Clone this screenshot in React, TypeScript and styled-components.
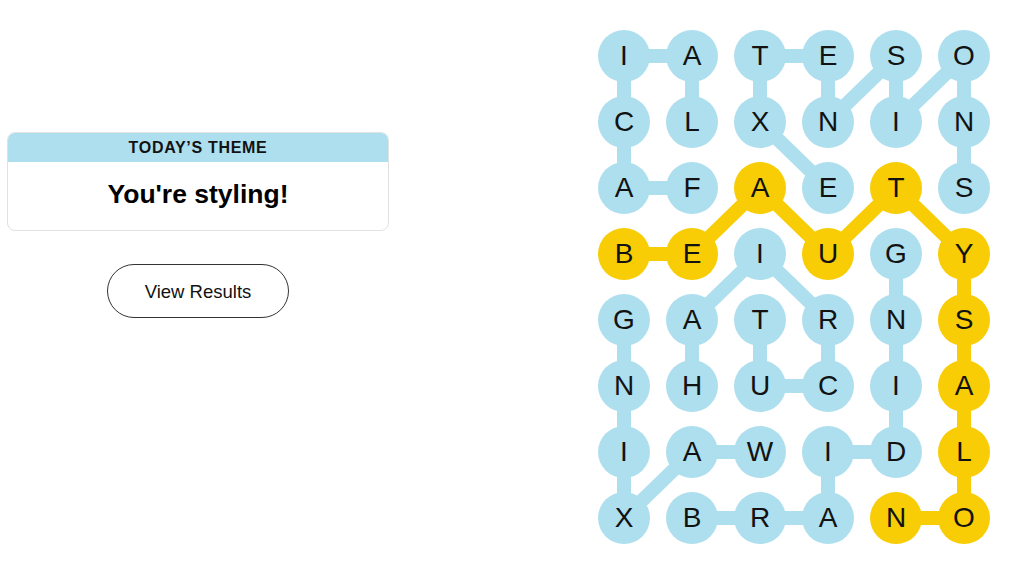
import styled, { createGlobalStyle } from "styled-components";

const BLUE = "#aedfee";
const YELLOW = "#f8cd05";

const CELL = 52;
const COL_GAP = 16;
const ROW_GAP = 14;

const LETTERS = [
  "IATESO",
  "CLXNIN",
  "AFAETS",
  "BEIUGY",
  "GATRNS",
  "NHUCIA",
  "IAWIDL",
  "XBRANO",
];

type Link = [number, number, number, number];

const blueLinks: Link[] = [
  // FACIAL
  [2, 1, 2, 0], [2, 0, 1, 0], [1, 0, 0, 0], [0, 0, 0, 1], [0, 1, 1, 1],
  // EXTENSIONS
  [2, 3, 1, 2], [1, 2, 0, 2], [0, 2, 0, 3], [0, 3, 1, 3], [1, 3, 0, 4],
  [0, 4, 1, 4], [1, 4, 0, 5], [0, 5, 1, 5], [1, 5, 2, 5],
  // HAIRCUT
  [5, 1, 4, 1], [4, 1, 3, 2], [3, 2, 4, 3], [4, 3, 5, 3], [5, 3, 5, 2], [5, 2, 4, 2],
  // WAXING
  [6, 2, 6, 1], [6, 1, 7, 0], [7, 0, 6, 0], [6, 0, 5, 0], [5, 0, 4, 0],
  // BRAIDING
  [7, 1, 7, 2], [7, 2, 7, 3], [7, 3, 6, 3], [6, 3, 6, 4], [6, 4, 5, 4], [5, 4, 4, 4], [4, 4, 3, 4],
];

// BEAUTYSALON
const spanLinks: Link[] = [
  [3, 0, 3, 1], [3, 1, 2, 2], [2, 2, 3, 3], [3, 3, 2, 4], [2, 4, 3, 5],
  [3, 5, 4, 5], [4, 5, 5, 5], [5, 5, 6, 5], [6, 5, 7, 5], [7, 5, 7, 4],
];

const spanCells = new Set(spanLinks.flatMap(([a, b, c, d]) => [`${a}-${b}`, `${c}-${d}`]));

const GlobalStyle = createGlobalStyle`
  html, body {
    margin: 0;
    padding: 0;
    background: #ffffff;
    font-family: "Liberation Sans", Arial, sans-serif;
    color: #121212;
  }
`;

const Page = styled.div`
  display: flex;
  align-items: flex-start;
  width: 1024px;
  height: 576px;
  padding: 30px 0 0 7px;
  box-sizing: border-box;
`;

const SidePanel = styled.div`
  width: 382px;
  margin-top: 102px;
  display: flex;
  flex-direction: column;
  align-items: center;
  gap: 33px;
`;

const ThemeCard = styled.div`
  width: 100%;
  border: 1px solid #e2e2e2;
  border-radius: 8px;
  overflow: hidden;
  box-sizing: border-box;
`;

const ThemeHeader = styled.div`
  height: 29px;
  background: ${BLUE};
  display: flex;
  align-items: center;
  justify-content: center;
  font-size: 16px;
  font-weight: 700;
  letter-spacing: 0.7px;
  color: #121212;
`;

const ThemeBody = styled.div`
  height: 68px;
  display: flex;
  align-items: center;
  justify-content: center;
  font-size: 26.5px;
  font-weight: 700;
  color: #000;
  padding-bottom: 4px;
  box-sizing: border-box;
`;

const ResultsButton = styled.button`
  width: 182px;
  height: 54px;
  border: 1px solid #333;
  border-radius: 27px;
  background: #fff;
  font-family: "Liberation Sans", Arial, sans-serif;
  font-size: 18.5px;
  color: #121212;
  padding-top: 3px;
  cursor: pointer;
`;

const Board = styled.div`
  position: relative;
  margin-left: 209px;
`;

const Lines = styled.svg`
  position: absolute;
  left: 0;
  top: 0;
  pointer-events: none;
`;

const LetterGrid = styled.div`
  position: relative;
  display: grid;
  grid-template-columns: repeat(6, ${CELL}px);
  grid-template-rows: repeat(8, ${CELL}px);
  column-gap: ${COL_GAP}px;
  row-gap: ${ROW_GAP}px;
`;

const Letter = styled.div<{ $span: boolean }>`
  width: ${CELL}px;
  height: ${CELL}px;
  border-radius: 50%;
  background: ${(p) => (p.$span ? YELLOW : BLUE)};
  display: flex;
  align-items: center;
  justify-content: center;
  font-size: 28px;
  color: #121212;
  user-select: none;
`;

const cx = (c: number) => c * (CELL + COL_GAP) + CELL / 2;
const cy = (r: number) => r * (CELL + ROW_GAP) + CELL / 2;

const boardW = 6 * CELL + 5 * COL_GAP;
const boardH = 8 * CELL + 7 * ROW_GAP;

function Connectors({ links, color }: { links: Link[]; color: string }) {
  return (
    <>
      {links.map(([r1, c1, r2, c2], i) => (
        <line
          key={i}
          x1={cx(c1)}
          y1={cy(r1)}
          x2={cx(c2)}
          y2={cy(r2)}
          stroke={color}
          strokeWidth={14}
        />
      ))}
    </>
  );
}

export default function App() {
  return (
    <>
      <GlobalStyle />
      <Page>
        <SidePanel>
          <ThemeCard>
            <ThemeHeader>TODAY’S THEME</ThemeHeader>
            <ThemeBody>You're styling!</ThemeBody>
          </ThemeCard>
          <ResultsButton>View Results</ResultsButton>
        </SidePanel>
        <Board>
          <Lines width={boardW} height={boardH}>
            <Connectors links={blueLinks} color={BLUE} />
            <Connectors links={spanLinks} color={YELLOW} />
          </Lines>
          <LetterGrid>
            {LETTERS.map((row, r) =>
              row.split("").map((ch, c) => (
                <Letter key={`${r}-${c}`} $span={spanCells.has(`${r}-${c}`)}>
                  {ch}
                </Letter>
              ))
            )}
          </LetterGrid>
        </Board>
      </Page>
    </>
  );
}
